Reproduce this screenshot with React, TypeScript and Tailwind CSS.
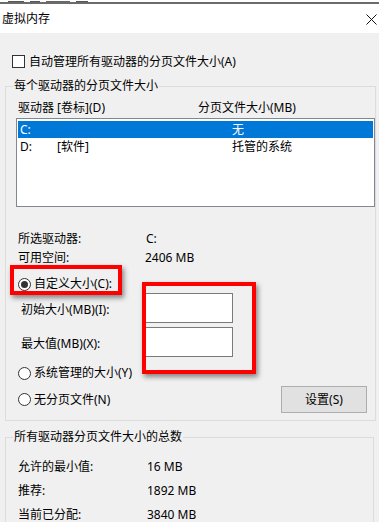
import React from "react"

const font = { fontFamily: '"Noto Sans", "Noto Sans CJK SC", sans-serif' }

function Radio({ checked, label }: { checked?: boolean; label: string }) {
  return (
    <div className="flex items-center">
      <span className="w-[13px] h-[13px] rounded-full border border-[#333] bg-white flex items-center justify-center">
        {checked && <span className="w-[7px] h-[7px] rounded-full bg-[#333]" />}
      </span>
      <span className="ml-[3px]">{label}</span>
    </div>
  )
}

function Group({ title, children }: { title: string; children: React.ReactNode }) {
  return (
    <fieldset className="border border-[#dcdcdc] ml-[5px] w-[369px]">
      <legend className="ml-[7px] px-px leading-[16px]">{title}</legend>
      {children}
    </fieldset>
  )
}

export default function App() {
  return (
    <div
      className="w-[379px] h-[522px] overflow-hidden bg-[#f0f0f0] text-[12px] text-black relative"
      style={font}
    >
      {/* bit of the window behind */}
      <div className="h-[2px] bg-white flex items-end gap-[6px] pl-[8px]">
        <span className="w-[16px] h-px bg-[#555]" />
        <span className="w-[10px] h-px bg-[#555]" />
        <span className="w-[24px] h-px bg-[#666]" />
        <span className="w-[12px] h-px bg-[#555]" />
      </div>
      <div className="h-[2px] bg-[#6b6b6b]" />

      {/* title bar */}
      <div className="h-[29px] bg-white flex items-center justify-between pl-[2px] pr-[2px]">
        <span className="text-[12px] leading-none pt-[1px]">虚拟内存</span>
        <svg width="11" height="11" viewBox="0 0 11 11" className="mt-[1px]">
          <path d="M0.5 0.5 L10.5 10.5 M10.5 0.5 L0.5 10.5" stroke="#111" strokeWidth="1" />
        </svg>
      </div>

      {/* auto manage */}
      <div className="flex items-center pl-[12px] mt-[22px] h-[13px]">
        <span className="w-[13px] h-[13px] border border-[#333] bg-white" />
        <span className="ml-[4px]">自动管理所有驱动器的分页文件大小(A)</span>
      </div>

      <div className="mt-[10px]">
        <Group title="每个驱动器的分页文件大小">
          <div className="pl-[10px] pt-[6px] pb-[7px]">
            <div className="flex h-[16px] items-center pl-[2px]">
              <span className="w-[180px]">驱动器 [卷标](D)</span>
              <span>分页文件大小(MB)</span>
            </div>
            <div className="mt-[2px] h-[89px] w-[359px] border border-[#828790] bg-white pt-[2px] px-px">
              <div className="h-[17px] bg-[#0078d7] text-white flex items-center pl-[2px]">
                <span className="w-[212px]">C:</span>
                <span>无</span>
              </div>
              <div className="h-[17px] flex items-center pl-[2px]">
                <span className="w-[37px]">D:</span>
                <span className="w-[175px]">[软件]</span>
                <span>托管的系统</span>
              </div>
            </div>

            <div className="mt-[22px] grid grid-cols-[127px_1fr] auto-rows-[19px] items-center pl-[2px]">
              <span>所选驱动器:</span>
              <span className="pl-px">C:</span>
              <span>可用空间:</span>
              <span>2406 MB</span>
            </div>

            <div className="relative pt-[8px]">
              <div className="h-[18px] flex items-center pl-[2px]">
                <Radio checked label="自定义大小(C):" />
              </div>
              <div className="flex items-center h-[30px]">
                <span className="w-[129px] pl-[5px] pt-[4px]">初始大小(MB)(I):</span>
                <div className="w-[88px] h-[30px] bg-white border border-[#7a7a7a]" />
              </div>
              <div className="flex items-center h-[30px] mt-[4px]">
                <span className="w-[129px] pl-[5px] pt-[4px]">最大值(MB)(X):</span>
                <div className="w-[88px] h-[30px] bg-white border border-[#7a7a7a]" />
              </div>
              <div className="mt-[7px] h-[18px] flex items-center pl-[2px]">
                <Radio label="系统管理的大小(Y)" />
              </div>
              <div className="mt-[4px] h-[27px] flex items-center justify-between pr-[8px] pl-[2px]">
                <Radio label="无分页文件(N)" />
                <button className="w-[86px] h-[27px] bg-[#e1e1e1] border border-[#adadad]">设置(S)</button>
              </div>

              {/* red highlight marks */}
              <div className="absolute left-[-6px] top-[-2px] w-[112px] h-[30px] border-[4px] border-[#ff0000] shadow-[2px_3px_5px_rgba(0,0,0,0.45)]" />
              <div className="absolute left-[126px] top-[15px] w-[114px] h-[92px] border-[4px] border-[#ff0000] shadow-[2px_3px_5px_rgba(0,0,0,0.45)]" />
            </div>
          </div>
        </Group>
      </div>

      <div className="mt-[8px]">
        <Group title="所有驱动器分页文件大小的总数">
          <div className="pl-[12px] pt-[10px] grid grid-cols-[129px_1fr] auto-rows-[24px] items-center">
            <span>允许的最小值:</span>
            <span>16 MB</span>
            <span>推荐:</span>
            <span>1892 MB</span>
            <span>当前已分配:</span>
            <span>3840 MB</span>
          </div>
        </Group>
      </div>
    </div>
  )
}
